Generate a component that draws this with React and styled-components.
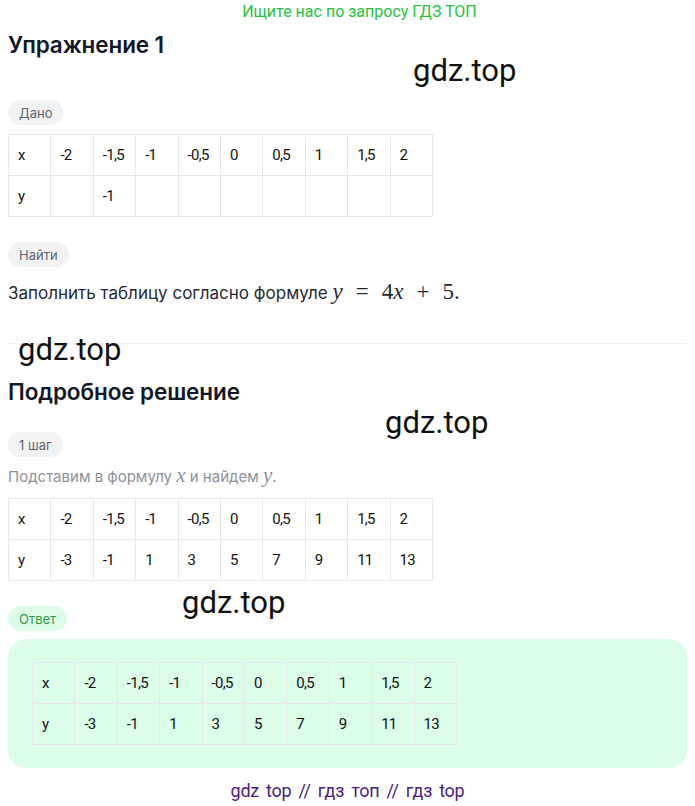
import React from 'react';
import styled, {createGlobalStyle} from 'styled-components';

const Global = createGlobalStyle`
  body {
    margin: 0;
    background: #fff;
    font-family: Inter, "Noto Sans", sans-serif;
    color: #111827;
  }
`;

const Page = styled.div`
  position: relative;
  padding: 0 8px 12px;
  width: 679px;
`;

const Promo = styled.div`
  text-align: center;
  padding-left: 24px;
  color: #25c23a;
  font-family: Roboto, sans-serif;
  font-size: 16px;
  line-height: 24px;
`;

const Title = styled.h2`
  margin: ${p => p.$top || 8}px 0 0;
  font-size: 22.5px;
  font-weight: 600;
  line-height: 28px;
  letter-spacing: -0.1px;
`;

const Pill = styled.div`
  display: inline-flex;
  align-items: center;
  height: 25px;
  padding: 0 11px;
  margin-top: ${p => p.$top}px;
  border-radius: 13px;
  font-size: 13px;
  background: ${p => (p.$green ? '#dcfce7' : '#f1f2f4')};
  color: ${p => (p.$green ? '#2f9a4f' : '#5f6570')};
`;

const Grid = styled.table`
  border-collapse: collapse;
  margin-top: ${p => p.$top}px;
  font-family: Roboto, sans-serif;
  font-size: 15px;
  letter-spacing: -0.7px;
  color: #111;
  td {
    width: 42.4px;
    height: 41px;
    box-sizing: border-box;
    border: 1px solid #e5e7eb;
    padding: 0 0 0 9px;
    vertical-align: middle;
  }
`;

const Text = styled.p`
  margin: ${p => p.$top}px 0 0;
  font-size: ${p => (p.$muted ? 15 : 17)}px;
  line-height: 24px;
  color: ${p => (p.$muted ? '#8c9199' : '#1f2937')};
`;

const Var = styled.i`
  font-family: "Liberation Serif", "DejaVu Serif", serif;
  font-size: ${p => (p.$small ? 21 : 23)}px;
  line-height: 1;
`;

const Num = styled.span`
  font-family: "Liberation Serif", "DejaVu Serif", serif;
  font-size: 23px;
  line-height: 1;
`;

const Op = styled(Num)`
  margin: 0 13px;
`;

const Divider = styled.hr`
  border: 0;
  border-top: 1px solid #eef0f2;
  margin: 38px 0 0;
`;

const AnswerBox = styled.div`
  margin-top: 8px;
  padding: 23px 24px 23px;
  background: #dcfde8;
  border-radius: 18px;
`;

const Footer = styled.div`
  margin-top: 11px;
  text-align: center;
  font-family: Roboto, sans-serif;
  font-size: 18px;
  line-height: 24px;
  color: #4b1b7f;
  letter-spacing: -0.3px;
  word-spacing: 3px;
`;

const Mark = styled.div`
  position: absolute;
  left: ${p => p.$x}px;
  top: ${p => p.$y}px;
  font-family: Roboto, sans-serif;
  font-size: 31px;
  color: #111;
  line-height: 36px;
`;

const xs = ['x', '-2', '-1,5', '-1', '-0,5', '0', '0,5', '1', '1,5', '2'];
const ys = ['y', '-3', '-1', '1', '3', '5', '7', '9', '11', '13'];
const given = ['y', '', '-1', '', '', '', '', '', '', ''];

const Table = ({rows, top}) => (
  <Grid $top={top}>
    <tbody>
      {rows.map((r, i) => (
        <tr key={i}>
          {r.map((c, j) => <td key={j}>{c}</td>)}
        </tr>
      ))}
    </tbody>
  </Grid>
);

const App = () => {
  return (
    <>
      <Global />
      <Page>
        <Promo>Ищите нас по запросу ГДЗ ТОП</Promo>
        <Title $top={7}>Упражнение 1</Title>
        <Pill $top={41}>Дано</Pill>
        <Table rows={[xs, given]} top={9} />
        <Pill $top={25}>Найти</Pill>
        <Text $top={13}>
          Заполнить таблицу согласно формуле <Var>y</Var><Op>=</Op><Num>4</Num><Var>x</Var><Op>+</Op><Num>5.</Num>
        </Text>
        <Divider />
        <Title $top={34}>Подробное решение</Title>
        <Pill $top={26}>1 шаг</Pill>
        <Text $top={8} $muted>
          Подставим в формулу <Var $small>x</Var> и найдем <Var $small>y</Var>.
        </Text>
        <Table rows={[xs, ys]} top={9} />
        <Pill $top={25} $green>Ответ</Pill>
        <AnswerBox>
          <Table rows={[xs, ys]} top={0} />
        </AnswerBox>
        <Footer>gdz top // гдз топ // гдз top</Footer>
        <Mark $x={413} $y={53}>gdz.top</Mark>
        <Mark $x={18} $y={332}>gdz.top</Mark>
        <Mark $x={385} $y={405}>gdz.top</Mark>
        <Mark $x={182} $y={585}>gdz.top</Mark>
      </Page>
    </>
  );
};

export default App;
